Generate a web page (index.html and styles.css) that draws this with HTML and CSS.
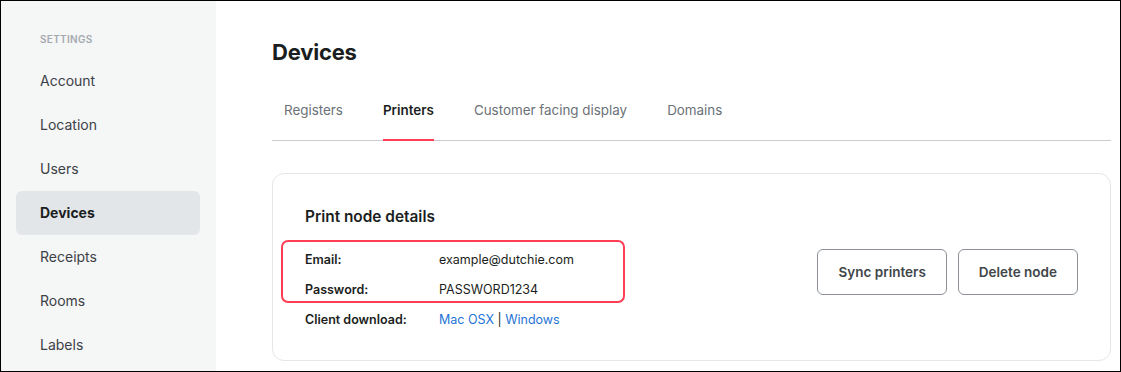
FILE: index.html
```html
<!DOCTYPE html>
<html lang="en">

<head>
    <meta charset="UTF-8">
    <meta name="viewport" content="width=device-width, initial-scale=1.0">
    <title>Settings - Devices</title>
    <link rel="stylesheet" href="styles.css">
</head>

<body>
    <div class="frame">
        <nav class="sidebar">
            <div class="sidebar-title">Settings</div>
            <a class="nav-item" href="#">Account</a>
            <a class="nav-item" href="#">Location</a>
            <a class="nav-item" href="#">Users</a>
            <a class="nav-item active" href="#">Devices</a>
            <a class="nav-item" href="#">Receipts</a>
            <a class="nav-item" href="#">Rooms</a>
            <a class="nav-item" href="#">Labels</a>
        </nav>

        <main class="content">
            <h1>Devices</h1>

            <div class="tabs">
                <a class="tab" href="#">Registers</a>
                <a class="tab active" href="#">Printers</a>
                <a class="tab" href="#">Customer facing display</a>
                <a class="tab" href="#">Domains</a>
            </div>

            <section class="card">
                <div class="details">
                    <h2>Print node details</h2>
                    <div class="highlight">
                        <div class="row">
                            <span class="label">Email:</span>
                            <span class="value">example@dutchie.com</span>
                        </div>
                        <div class="row">
                            <span class="label">Password:</span>
                            <span class="value">PASSWORD1234</span>
                        </div>
                        <span class="ring"></span>
                    </div>
                    <div class="row">
                        <span class="label">Client download:</span>
                        <span class="value"><a href="#">Mac OSX</a> | <a href="#">Windows</a></span>
                    </div>
                </div>
                <div class="actions">
                    <button class="btn sync">Sync printers</button>
                    <button class="btn delete">Delete node</button>
                </div>
            </section>
        </main>
    </div>
</body>

</html>
```

FILE: styles.css
```css
:root {
    --sidebar-bg: #f5f6f6;
    --active-bg: #e3e6e9;
    --dark-text: #1b1e21;
    --nav-text: #3c4146;
    --muted-text: #6b7177;
    --line-color: #c9ccd0;
    --card-border: #e4e6e8;
    --accent: #ff3e56;
    --link-color: #1f74d6;
}

* {
    box-sizing: border-box;
}

body {
    margin: 0;
    font-family: Inter, "Noto Sans", sans-serif;
    color: var(--dark-text);
    background: #fff;
}

.frame {
    display: flex;
    width: 1121px;
    height: 372px;
    border: 1px solid #000;
    overflow: hidden;
}

/* sidebar */
.sidebar {
    width: 215px;
    flex-shrink: 0;
    background-color: var(--sidebar-bg);
    padding: 31px 16px 0 15px;
    display: flex;
    flex-direction: column;
}

.sidebar-title {
    font-size: 10px;
    font-weight: 600;
    line-height: 14px;
    letter-spacing: 0.3px;
    text-transform: uppercase;
    color: #a3a9ae;
    padding-left: 24px;
    margin-bottom: 13px;
}

.nav-item {
    display: block;
    height: 44px;
    line-height: 44px;
    padding-left: 24px;
    font-size: 14px;
    color: var(--nav-text);
    text-decoration: none;
    border-radius: 6px;
}

.nav-item.active {
    background-color: var(--active-bg);
    font-weight: 700;
    color: var(--dark-text);
}

/* main */
.content {
    flex: 1;
    padding: 36px 9px 0 56px;
}

h1 {
    margin: 0;
    font-size: 22px;
    line-height: 30px;
    font-weight: 700;
    letter-spacing: -0.2px;
}

.tabs {
    display: flex;
    gap: 40px;
    padding-left: 12px;
    margin-top: 33px;
    border-bottom: 1px solid var(--line-color);
}

.tab {
    font-size: 13.4px;
    line-height: 20px;
    padding-bottom: 19px;
    color: var(--muted-text);
    text-decoration: none;
    margin-bottom: -1px;
    border-bottom: 2px solid transparent;
}

.tab.active {
    color: var(--dark-text);
    font-weight: 600;
    border-bottom-color: var(--accent);
}

/* card */
.card {
    margin-top: 32px;
    border: 1px solid var(--card-border);
    border-radius: 12px;
    padding: 31px 32px 26px 32px;
    display: flex;
    align-items: center;
    justify-content: space-between;
}

.card h2 {
    margin: 0 0 15px;
    font-size: 15.4px;
    line-height: 24px;
    font-weight: 600;
}

.highlight {
    position: relative;
}

.ring {
    position: absolute;
    top: -4px;
    left: -24px;
    width: 344px;
    height: 63px;
    border: 2px solid var(--accent);
    border-radius: 7px;
}

.row {
    display: flex;
    height: 30px;
    align-items: center;
    font-size: 12.5px;
}

.label {
    width: 134px;
    font-weight: 600;
}

.value a {
    color: var(--link-color);
    text-decoration: none;
}

.actions {
    display: flex;
    gap: 11px;
    margin-top: 4px;
}

.btn {
    height: 46px;
    padding: 0 20px;
    background: #fff;
    border: 1px solid #8c9298;
    border-radius: 6px;
    font-family: inherit;
    font-size: 13.5px;
    font-weight: 600;
    color: #41464b;
}
```
